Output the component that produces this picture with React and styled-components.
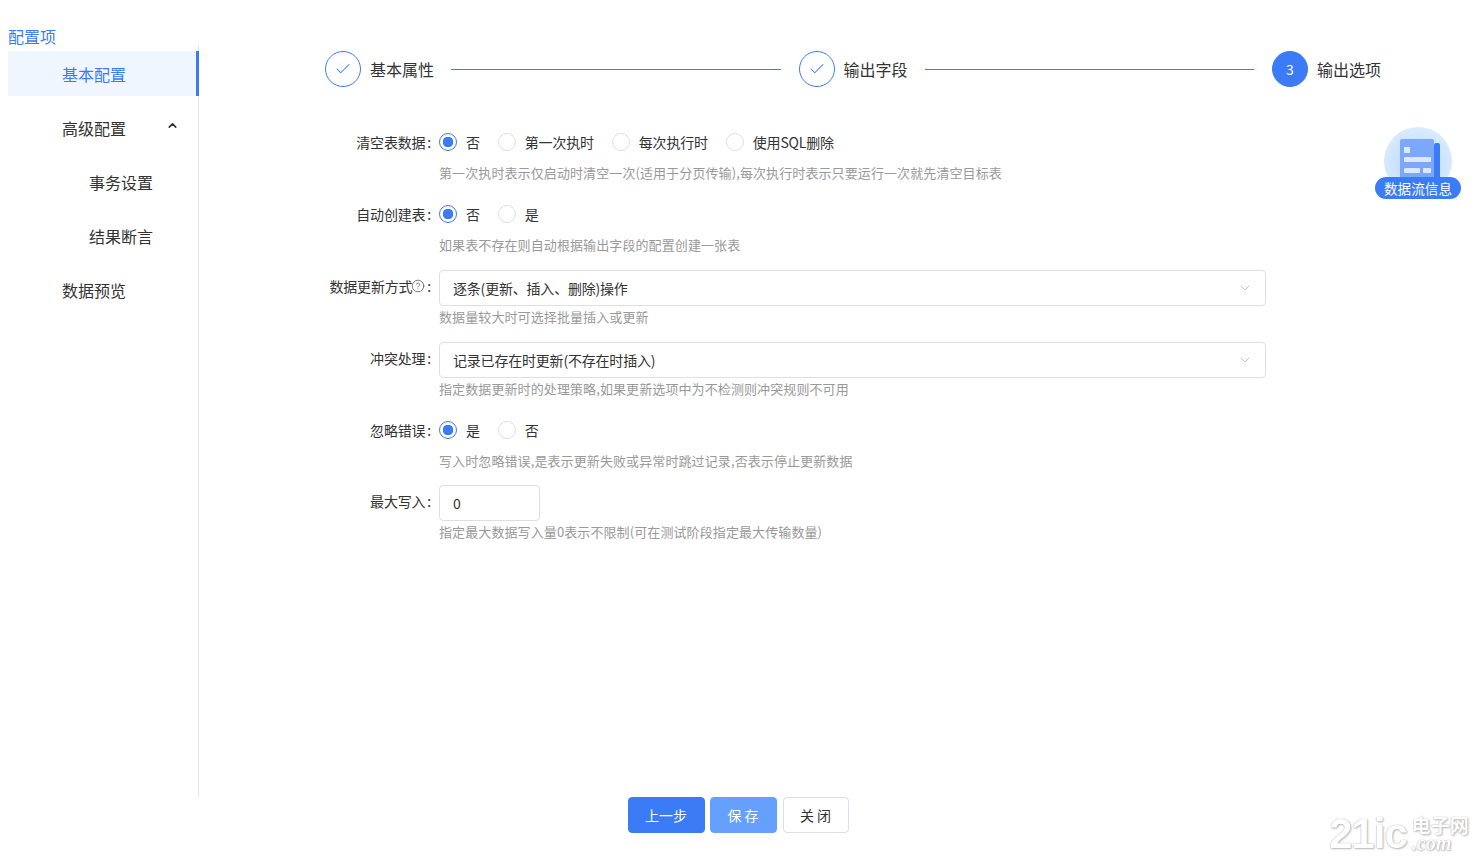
import styled, { createGlobalStyle } from 'styled-components';
import { useState } from 'react';
import { Check, ChevronDown, ChevronUp, CircleHelp } from 'lucide-react';

const GlobalStyle = createGlobalStyle`
html,body{
  margin:0;
  padding:0;
  background:#fff;
  font-family:"Noto Sans CJK SC","Noto Sans",sans-serif;
  color:#333;
}
*{box-sizing:border-box;}
`;

const Page = styled.div`
position:relative;
height:859px;
overflow:hidden;
`;
const Body = styled.div`
display:flex;
height:797px;
padding-left:8px;
`;
const Sidebar = styled.aside`
width:191px;
display:flex;
flex-direction:column;
`;
const SideTitle = styled.div`
margin-top:26px;
height:20px;
line-height:20px;
font-size:16px;
color:#3b7bf6;
`;
const Menu = styled.div`
flex:1;
padding-top:5px;
border-right:1px solid #e6e6e6;
`;
const MenuItem = styled.div`
position:relative;
display:flex;
align-items:center;
height:45px;
margin-bottom:9px;
margin-right:-1px;
padding-left:${p=>p.$child?81:54}px;
font-size:16px;
color:${p=>p.$active?'#3b7bf6':'#333'};
background:${p=>p.$active?'#eff6ff':'transparent'};
border-right:${p=>p.$active?'3px solid #3b7bf6':'none'};
svg{
  position:absolute;
  left:158px;
  top:14px;
}
`;
const Main = styled.main`
flex:1;
padding:51px 102px 0 126px;
`;
const Steps = styled.div`
display:flex;
align-items:center;
height:36px;
`;
const StepCircle = styled.div`
width:36px;
height:36px;
flex:none;
display:flex;
align-items:center;
justify-content:center;
border-radius:50%;
border:1px solid #3b7bf6;
color:${p=>p.$current?'#fff':'#3b7bf6'};
background:${p=>p.$current?'#3b7bf6':'#fff'};
font-size:14px;
`;
const StepText = styled.div`
margin-left:9px;
font-size:16px;
white-space:nowrap;
`;
const StepLine = styled.div`
flex:1;
height:1px;
margin:0 18px 0 17px;
background:#3b7bf6;
`;
const Form = styled.div`
margin:39px 0 0 -6px;
width:947px;
`;
const Row = styled.div`
display:flex;
margin-bottom:14px;
margin-top:${p=>p.$lift?-1:0}px;
`;
const Label = styled.div`
width:120px;
flex:none;
height:32px;
padding-right:8px;
display:flex;
align-items:center;
justify-content:flex-end;
font-size:14px;
letter-spacing:-0.2px;
white-space:nowrap;
svg{
  margin-left:-1px;
  color:#555;
}
`;
const Colon = styled.span`
margin-left:2px;
`;
const Field = styled.div`
flex:1;
min-width:0;
`;
const Control = styled.div`
height:36px;
`;
const Radios = styled.div`
display:flex;
align-items:center;
height:32px;
margin-bottom:4px;
`;
const RadioItem = styled.label`
display:flex;
align-items:center;
margin-right:18px;
font-size:14px;
letter-spacing:-0.2px;
cursor:pointer;
`;
const RadioInput = styled.input`
appearance:none;
width:18px;
height:18px;
margin:0 9px 0 0;
border-radius:50%;
border:1px solid #dcdfe6;
background:#fff;
cursor:pointer;
&:checked{
  border-color:#3b7bf6;
  background:radial-gradient(circle,#3b7bf6 0 5px,#fff 5.5px);
}
`;
const SelectBox = styled.div`
height:36px;
padding:0 12px 0 13px;
display:flex;
align-items:center;
justify-content:space-between;
border:1px solid #dcdfe6;
border-radius:4px;
font-size:14px;
letter-spacing:-0.2px;
svg{
  color:#b4b8c0;
}
`;
const NumberInput = styled.input`
display:block;
width:101px;
height:36px;
padding:0 13px;
border:1px solid #dcdfe6;
border-radius:4px;
outline:none;
font:inherit;
font-size:14px;
color:#333;
`;
const Hint = styled.div`
height:22px;
line-height:22px;
font-size:13px;
letter-spacing:0.1px;
color:#999;
white-space:nowrap;
`;
const Footer = styled.footer`
display:flex;
justify-content:center;
padding-right:7px;
`;
const Button = styled.button`
height:36px;
width:${p=>p.$w}px;
margin-left:${p=>p.$ml||0}px;
border:1px solid ${p=>p.$bg||'#dcdfe6'};
border-radius:4px;
background:${p=>p.$bg||'#fff'};
color:${p=>p.$bg?'#fff':'#333'};
font:inherit;
font-size:14px;
cursor:pointer;
`;
const Floating = styled.div`
position:absolute;
left:1375px;
top:127px;
width:86px;
height:72px;
`;
const FloatCircle = styled.div`
position:absolute;
left:9px;
top:0;
width:68px;
height:68px;
border-radius:50%;
background:radial-gradient(circle at 50% 55%,#b5d5ff,#e3f0ff 90%);
`;
const FloatPill = styled.div`
position:absolute;
left:0;
top:50px;
width:86px;
height:22px;
line-height:22px;
border-radius:11px;
background:#3b7bf6;
color:#fff;
font-size:13.6px;
text-align:center;
white-space:nowrap;
`;
const Watermark = styled.div`
position:absolute;
left:1329px;
top:812px;
display:flex;
align-items:center;
color:#fff;
text-shadow:0 0 1px #999,1px 1px 2px #bbb;
pointer-events:none;
`;
const WmMain = styled.div`
font-family:"Liberation Sans",sans-serif;
font-size:42px;
font-weight:700;
line-height:44px;
letter-spacing:-1px;
`;
const WmSide = styled.div`
margin-left:5px;
font-size:19px;
line-height:19px;
font-weight:700;
span{
  display:block;
  font-family:"Liberation Serif",serif;
  font-style:italic;
  font-size:20px;
}
`;

const RadioGroup = ({name,options})=>{
  const [value,setValue] = useState(options[0]);
  return (
    <Radios>
      {options.map(o=>(
        <RadioItem key={o}>
          <RadioInput type="radio" name={name} checked={value===o} onChange={()=>setValue(o)} />
          {o}
        </RadioItem>
      ))}
    </Radios>
  )
}

const App = () => {
  return (
    <Page>
      <GlobalStyle />
      <Body>
        <Sidebar>
          <SideTitle>配置项</SideTitle>
          <Menu>
            <MenuItem $active>基本配置</MenuItem>
            <MenuItem>高级配置<ChevronUp size={13} strokeWidth={3} /></MenuItem>
            <MenuItem $child>事务设置</MenuItem>
            <MenuItem $child>结果断言</MenuItem>
            <MenuItem>数据预览</MenuItem>
          </Menu>
        </Sidebar>
        <Main>
          <Steps>
            <StepCircle><Check size={18} strokeWidth={1.4} /></StepCircle>
            <StepText>基本属性</StepText>
            <StepLine />
            <StepCircle><Check size={18} strokeWidth={1.4} /></StepCircle>
            <StepText>输出字段</StepText>
            <StepLine />
            <StepCircle $current>3</StepCircle>
            <StepText>输出选项</StepText>
          </Steps>
          <Form>
            <Row>
              <Label>清空表数据<Colon>:</Colon></Label>
              <Field>
                <RadioGroup name="clear" options={['否','第一次执时','每次执行时','使用SQL删除']} />
                <Hint>第一次执时表示仅启动时清空一次(适用于分页传输),每次执行时表示只要运行一次就先清空目标表</Hint>
              </Field>
            </Row>
            <Row>
              <Label>自动创建表<Colon>:</Colon></Label>
              <Field>
                <RadioGroup name="create" options={['否','是']} />
                <Hint>如果表不存在则自动根据输出字段的配置创建一张表</Hint>
              </Field>
            </Row>
            <Row>
              <Label>数据更新方式<CircleHelp size={14} strokeWidth={1.3} /><Colon>:</Colon></Label>
              <Field>
                <Control>
                  <SelectBox>逐条(更新、插入、删除)操作<ChevronDown size={16} strokeWidth={1.2} /></SelectBox>
                </Control>
                <Hint>数据量较大时可选择批量插入或更新</Hint>
              </Field>
            </Row>
            <Row>
              <Label>冲突处理<Colon>:</Colon></Label>
              <Field>
                <Control>
                  <SelectBox>记录已存在时更新(不存在时插入)<ChevronDown size={16} strokeWidth={1.2} /></SelectBox>
                </Control>
                <Hint>指定数据更新时的处理策略,如果更新选项中为不检测则冲突规则不可用</Hint>
              </Field>
            </Row>
            <Row>
              <Label>忽略错误<Colon>:</Colon></Label>
              <Field>
                <RadioGroup name="ignore" options={['是','否']} />
                <Hint>写入时忽略错误,是表示更新失败或异常时跳过记录,否表示停止更新数据</Hint>
              </Field>
            </Row>
            <Row $lift>
              <Label>最大写入<Colon>:</Colon></Label>
              <Field>
                <Control>
                  <NumberInput defaultValue="0" />
                </Control>
                <Hint>指定最大数据写入量0表示不限制(可在测试阶段指定最大传输数量)</Hint>
              </Field>
            </Row>
          </Form>
        </Main>
      </Body>
      <Footer>
        <Button $w={77} $bg="#3b7bf6">上一步</Button>
        <Button $w={67} $ml={5} $bg="#66a0ff">保 存</Button>
        <Button $w={66} $ml={6}>关 闭</Button>
      </Footer>
      <Floating>
        <FloatCircle>
          <svg width="68" height="68" viewBox="0 0 68 68">
            <rect x="50" y="16" width="6" height="36" rx="2" fill="#3b7bf6" />
            <rect x="16" y="12" width="34" height="40" rx="2" fill="#7ba8fb" />
            <rect x="20" y="20" width="6" height="6" fill="#dbe8fe" />
            <rect x="20" y="30" width="27" height="5" rx="1" fill="#dbe8fe" />
            <rect x="20" y="41" width="16" height="5" rx="1" fill="#dbe8fe" />
            <rect x="39" y="41" width="8" height="5" rx="1" fill="#dbe8fe" />
          </svg>
        </FloatCircle>
        <FloatPill>数据流信息</FloatPill>
      </Floating>
      <Watermark>
        <WmMain>21ic</WmMain>
        <WmSide>电子网<span>.com</span></WmSide>
      </Watermark>
    </Page>
  )
}

export default App
